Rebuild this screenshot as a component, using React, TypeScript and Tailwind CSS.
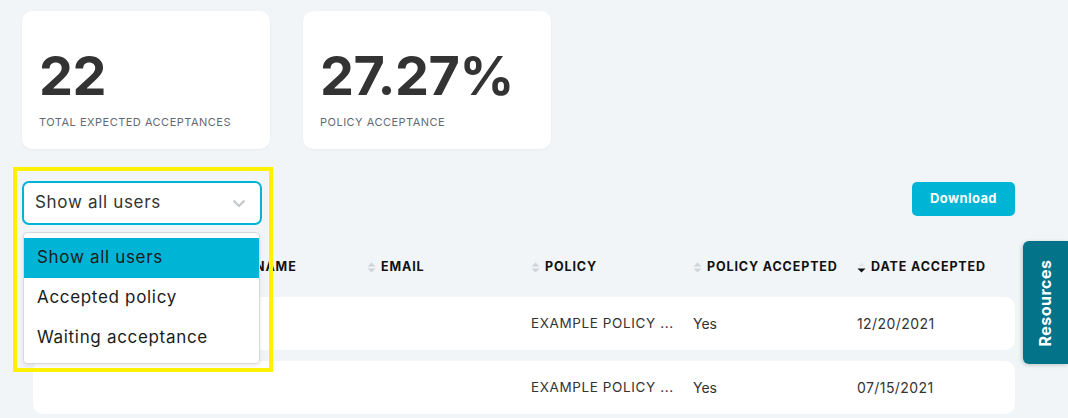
import React from 'react';

function SortIcon({ active }: { active?: boolean }) {
    return (
        <svg width="9" height="11" viewBox="0 0 9 11" className="shrink-0">
            <path d="M4.5 0.5 L8.5 4.5 L0.5 4.5 Z" fill={active ? '#e3e7ea' : '#cfd4d8'} />
            <path d="M4.5 10.5 L8.5 6.5 L0.5 6.5 Z" fill={active ? '#111111' : '#cfd4d8'} />
        </svg>
    );
}

function StatCard({ value, label }: { value: string; label: string }) {
    return (
        <div className="w-[248px] h-[138px] bg-white rounded-[10px] shadow-[0_1px_3px_rgba(0,0,0,0.04)] pl-[17px] pt-[31px]">
            <div className="text-[54px] leading-[68px] font-bold text-[#333333] tracking-[-0.01em]">{value}</div>
            <div className="mt-[4px] text-[11px] text-[#5f6b72] tracking-[0.045em]">{label}</div>
        </div>
    );
}

const columns = ['', 'NAME', 'EMAIL', 'POLICY', 'POLICY ACCEPTED', 'DATE ACCEPTED'];
const grid = 'grid grid-cols-[208px_126px_164px_162px_164px_1fr]';

const rows = [
    { policy: 'EXAMPLE POLICY ...', accepted: 'Yes', date: '12/20/2021' },
    { policy: 'EXAMPLE POLICY ...', accepted: 'Yes', date: '07/15/2021' },
];

export default function App() {
    return (
        <div
            className="relative h-[418px] w-full overflow-hidden bg-[#f1f5f8]"
            style={{ fontFamily: 'Inter, "Noto Sans", sans-serif' }}
        >
            <div className="pl-[22px] pr-[53px] pt-[11px]">
                <div className="flex gap-[33px]">
                    <StatCard value="22" label="TOTAL EXPECTED ACCEPTANCES" />
                    <StatCard value="27.27%" label="POLICY ACCEPTANCE" />
                </div>

                <div className="mt-[32px] flex items-start justify-between">
                    <div className="relative z-10 w-[240px]">
                        <div className="flex h-[44px] items-center justify-between rounded-[7px] border-2 border-[#00b4d5] bg-white pl-[11px] pr-[14px]">
                            <span className="text-[17px] tracking-[0.04em] text-[#333333]">Show all users</span>
                            <svg width="14" height="9" viewBox="0 0 14 9" fill="none">
                                <path d="M1.5 1.5 L7 7 L12.5 1.5" stroke="#c3c7ca" strokeWidth="2" />
                            </svg>
                        </div>
                        <div className="absolute left-[1px] top-[51px] w-[237px] rounded-[4px] border border-[#d6d9dc] bg-white py-[5px] text-[17px] tracking-[0.04em] text-[#1b1b1b] shadow-[0_2px_4px_rgba(0,0,0,0.08)]">
                            <div className="flex h-[40px] items-center bg-[#00b4d5] px-[13px]">Show all users</div>
                            <div className="flex h-[40px] items-center px-[13px]">Accepted policy</div>
                            <div className="flex h-[40px] items-center px-[13px]">Waiting acceptance</div>
                        </div>
                        <div className="pointer-events-none absolute left-[-9px] top-[-14px] h-[205px] w-[260px] border-4 border-[#fff200]" />
                    </div>
                    <button className="mt-[1px] h-[34px] w-[103px] rounded-[5px] bg-[#00b4d5] text-[13px] font-bold tracking-[0.03em] text-white">
                        Download
                    </button>
                </div>

                <div className="ml-[11px] mt-[15px]">
                    <div className={`${grid} h-[57px] items-start pt-[18px]`}>
                        {columns.map((c, i) => (
                            <div key={i} className="flex items-center gap-[5px]">
                                {c && <SortIcon active={c === 'DATE ACCEPTED'} />}
                                {c && <span className="text-[12.5px] font-bold tracking-[0.07em] text-[#111111]">{c}</span>}
                            </div>
                        ))}
                    </div>
                    <div className="flex flex-col gap-[11px]">
                        {rows.map((r, i) => (
                            <div key={i} className={`${grid} h-[53px] items-center rounded-[10px] bg-white text-[14px] text-[#333333]`}>
                                <div />
                                <div />
                                <div />
                                <div className="text-[13.5px] tracking-[0.045em]">{r.policy}</div>
                                <div>{r.accepted}</div>
                                <div className="tracking-[0.03em]">{r.date}</div>
                            </div>
                        ))}
                    </div>
                </div>
            </div>

            <div className="absolute right-0 top-[241px] flex h-[123px] w-[45px] items-center justify-center rounded-l-[6px] bg-[#03738a] shadow-[-1px_1px_4px_rgba(0,0,0,0.2)]">
                <span className="-rotate-90 whitespace-nowrap text-[16px] font-bold tracking-[0.03em] text-white">Resources</span>
            </div>
        </div>
    );
}
